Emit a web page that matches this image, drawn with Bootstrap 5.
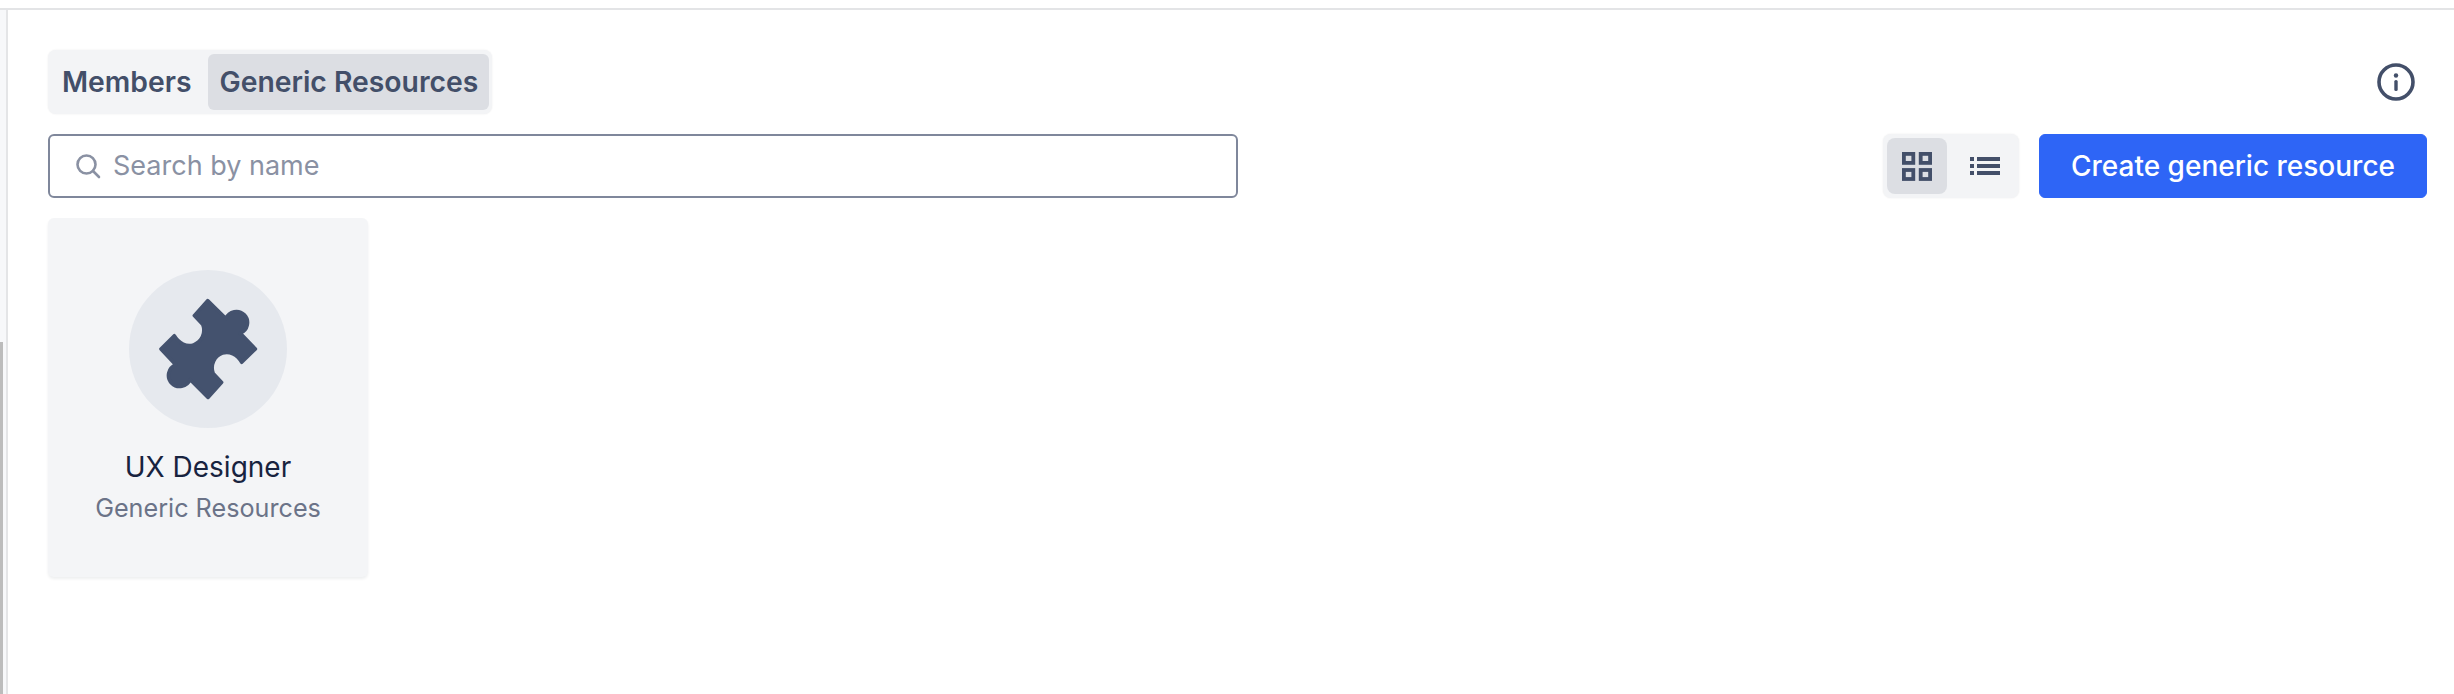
<!doctype html>
<html lang="en">
<head>
<meta charset="utf-8">
<title>Generic Resources</title>
<link href="https://cdn.jsdelivr.net/npm/bootstrap@5.3.0/dist/css/bootstrap.min.css" rel="stylesheet">
<style>
html,body{height:100%;}
body{font-family:Inter,"Noto Sans",sans-serif;background:#fff;overflow:hidden;}
.shell{height:694px;padding-top:8px;}
.frame{height:100%;border-top:2px solid #e3e4e6;}
.rail{width:8px;flex:none;border-right:2px solid #e4e5e7;background:#f7f8fa;}
.rail-space{height:332px;}
.rail-mark{width:3px;height:352px;background:#bcbcbc;}
.main{padding:40px 27px 0 40px;}
.seg{background:#f3f4f6;border-radius:8px;padding:4px;box-shadow:0 0 2px rgba(17,24,39,.08);}
.tabs{height:64px;width:444px;gap:6px;}
.tab-btn{height:56px;padding:0 11px 0 10px;border-radius:8px;font-size:28.3px;font-weight:600;color:#434f69;line-height:56px;white-space:nowrap;}
.nav-pills .tab-btn.active{padding:0 11px;background:#dcdee3;color:#434f69;}
.info{width:38px;height:38px;margin-right:12px;}
.toolbar{margin-top:20px;height:64px;}
.search{width:1190px;height:64px;border:2px solid #7f879b;border-radius:6px;background:#fff;padding:0 24px 0 25px;gap:12px;}
.search input{font-size:27px;color:#434f69;line-height:60px;padding:0;outline:0;}
.search input::placeholder{color:#8a91a3;opacity:1;}
.toggle{width:136px;height:64px;}
.view-btn{width:60px;height:56px;border-radius:8px;border:0;padding:0;background:transparent;}
.view-btn.on{background:#dcdee3;}
.view-btn + .view-btn{margin-left:8px;}
.make-btn{width:388px;height:64px;margin-left:20px;background:#2e65f6;border-color:#2e65f6;font-size:28px;font-weight:500;border-radius:6px;padding:0;}
.tile{width:320px;height:359px;margin-top:20px;background:#f4f5f7;border:0;border-radius:6px;box-shadow:0 2px 3px rgba(17,24,39,.07);padding-top:52px;}
.disc{width:158px;height:158px;border-radius:50%;background:#e6e9ee;}
.tile-name{font-size:28px;line-height:34px;color:#18233f;margin-top:22px;}
.tile-kind{font-size:25.2px;line-height:32px;color:#6b7388;margin-top:8px;}
</style>
</head>
<body>
<div class="shell">
  <div class="frame d-flex">
    <aside class="rail"><div class="rail-space"></div><div class="rail-mark"></div></aside>
    <main class="main flex-grow-1">
      <div class="d-flex justify-content-between align-items-center">
        <ul class="nav nav-pills seg tabs flex-nowrap">
          <li class="nav-item"><a class="nav-link tab-btn" href="#">Members</a></li>
          <li class="nav-item"><a class="nav-link tab-btn active" href="#">Generic Resources</a></li>
        </ul>
        <svg class="info" viewBox="0 0 38 38" fill="none" aria-label="Info">
          <circle cx="19" cy="19" r="17" stroke="#434f69" stroke-width="3.6"/>
          <circle cx="19" cy="12.5" r="2.2" fill="#434f69"/>
          <rect x="17.3" y="17" width="3.4" height="11" rx="1.6" fill="#434f69"/>
        </svg>
      </div>
      <div class="toolbar d-flex align-items-center">
        <div class="search d-flex align-items-center">
          <svg width="26" height="26" viewBox="0 0 26 26" fill="none" stroke="#8a91a3" stroke-width="2.6" stroke-linecap="round"><circle cx="11.5" cy="11.5" r="9"/><path d="M18 18l6 6"/></svg>
          <input class="border-0 bg-transparent flex-grow-1 shadow-none" type="text" placeholder="Search by name">
        </div>
        <div class="ms-auto d-flex align-items-center">
          <div class="seg toggle d-flex align-items-center">
            <button class="view-btn on d-flex align-items-center justify-content-center" type="button" aria-label="Grid view">
              <svg width="30" height="29" viewBox="0 0 30 29" fill="none" stroke="#434f69" stroke-width="3.8"><rect x="1.9" y="1.9" width="9.4" height="9"/><rect x="18.7" y="1.9" width="9.4" height="9"/><rect x="1.9" y="18" width="9.4" height="9"/><rect x="18.7" y="18" width="9.4" height="9"/></svg>
            </button>
            <button class="view-btn d-flex align-items-center justify-content-center" type="button" aria-label="List view">
              <svg width="30" height="18" viewBox="0 0 30 18" fill="#434f69"><rect x="0" y="0" width="4" height="4"/><rect x="7" y="0" width="23" height="4"/><rect x="0" y="7" width="4" height="4"/><rect x="7" y="7" width="23" height="4"/><rect x="0" y="14" width="4" height="4"/><rect x="7" y="14" width="23" height="4"/></svg>
            </button>
          </div>
          <button class="btn btn-primary make-btn" type="button">Create generic resource</button>
        </div>
      </div>
      <div class="card tile align-items-center text-center">
        <div class="disc d-flex align-items-center justify-content-center">
          <svg width="158" height="158" viewBox="36 25 450 450" aria-hidden="true"><path fill="#44526e" stroke="#44526e" stroke-width="10" stroke-linejoin="round" d="M260 112L312 163A32 32 0 1 1 353 205L396 250L357 288C344 266 322 255 302 262C279 270 267 295 276 320L300 345L261 388L210 337A32 32 0 1 1 169 295L127 250L165 212C178 234 200 245 220 238C243 230 255 205 246 180L222 155Z"/></svg>
        </div>
        <div class="tile-name">UX Designer</div>
        <div class="tile-kind">Generic Resources</div>
      </div>
    </main>
  </div>
</div>
<script src="https://cdn.jsdelivr.net/npm/bootstrap@5.3.0/dist/js/bootstrap.bundle.min.js"></script>
</body>
</html>
